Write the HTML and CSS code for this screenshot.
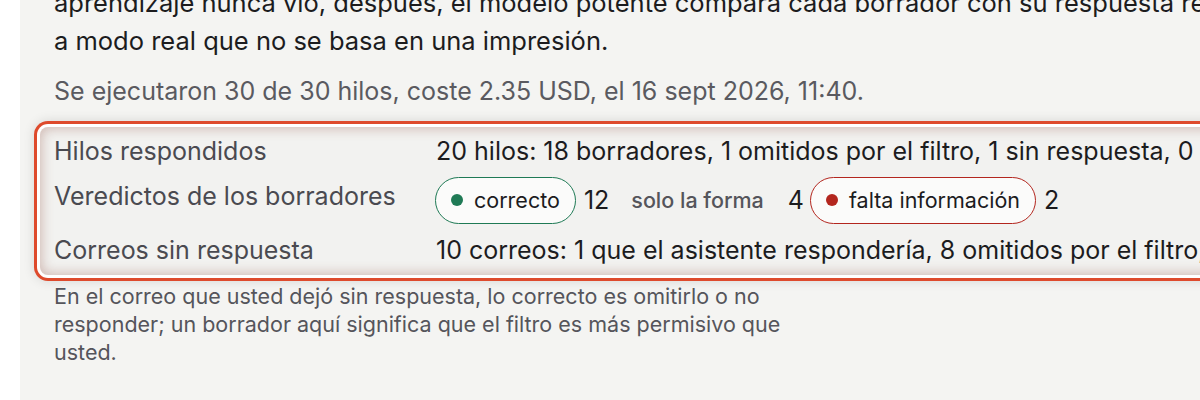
FILE: index.html
```html
<!DOCTYPE html>
<html lang="es">
<head>
<meta charset="utf-8">
<link rel="stylesheet" href="styles.css">
</head>
<body>
<main class="panel">
  <p class="intro">aprendizaje nunca vio, después, el modelo potente compara cada borrador con su respuesta real<br>a modo real que no se basa en una impresión.</p>
  <p class="meta">Se ejecutaron 30 de 30 hilos, coste 2.35 USD, el 16 sept 2026, 11:40.</p>
  <section class="summary">
    <div class="row">
      <div class="label">Hilos respondidos</div>
      <div class="value">20 hilos: 18 borradores, 1 omitidos por el filtro, 1 sin respuesta, 0 enviados</div>
    </div>
    <div class="row row-verdicts">
      <div class="label">Veredictos de los borradores</div>
      <div class="value verdicts">
        <span class="group"><span class="pill pill-ok"><span class="dot"></span>correcto</span><span class="count">12</span></span>
        <span class="group"><span class="pill pill-plain">solo la forma</span><span class="count">4</span></span>
        <span class="group"><span class="pill pill-bad"><span class="dot"></span>falta información</span><span class="count">2</span></span>
      </div>
    </div>
    <div class="row row-last">
      <div class="label">Correos sin respuesta</div>
      <div class="value">10 correos: 1 que el asistente respondería, 8 omitidos por el filtro, 1 sin borrador</div>
    </div>
  </section>
  <p class="note">En el correo que usted dejó sin respuesta, lo correcto es omitirlo o no responder; un borrador aquí significa que el filtro es más permisivo que usted.</p>
</main>
</body>
</html>
```
FILE: styles.css
```css
html, body {
  margin: 0;
  padding: 0;
  background: #ffffff;
  overflow: hidden;
  height: 400px;
}
body {
  font-family: Inter, "Noto Sans", sans-serif;
  color: #1e1e20;
}
.panel {
  display: flow-root;
  margin-left: 20px;
  width: 1400px;
  height: 420px;
  background: #f4f4f2;
  padding: 0 0 0 34px;
  box-sizing: border-box;
}
.intro {
  margin: -16px 0 0;
  font-size: 25.5px;
  line-height: 38px;
  white-space: nowrap;
  color: #1c1c1e;
}
.meta {
  margin: 15px 0 0;
  font-size: 25px;
  line-height: 32px;
  color: #5a5a60;
  white-space: nowrap;
}
.summary {
  margin: 20px 0 0 -14px;
  padding: 8px 0 0 14px;
  border-radius: 8px;
  background: #f2f2f0;
  box-shadow:
    inset 0 0 12px 2px rgba(140, 70, 55, 0.32),
    0 0 0 3px #ffffff,
    0 0 0 6px #de4a2c,
    0 0 12px 6px rgba(0, 0, 0, 0.12);
}
.row {
  display: grid;
  grid-template-columns: 382px 1fr;
  align-items: center;
  height: 32px;
  white-space: nowrap;
}
.row-verdicts { height: 58px; }
.row-last { height: 50px; }
.label {
  font-size: 25px;
  color: #4a4a50;
}
.value {
  font-size: 25px;
  color: #1c1c1e;
}
.verdicts {
  display: flex;
  align-items: center;
  gap: 6px;
  margin-left: -1px;
  margin-top: 8px;
}
.group {
  display: flex;
  align-items: center;
  gap: 8px;
}
.pill {
  display: inline-flex;
  align-items: center;
  gap: 11px;
  height: 47px;
  box-sizing: border-box;
  padding: 0 15px 0 15px;
  border-radius: 24px;
  font-size: 21.5px;
  background: #fbfbfa;
  color: #1c1c1e;
}
.dot {
  width: 12px;
  height: 12px;
  border-radius: 50%;
}
.pill-ok { border: 1.5px solid #1f7a55; }
.pill-ok .dot { background: #1f7a55; }
.pill-bad { border: 1.5px solid #b3261e; }
.pill-bad .dot { background: #b3261e; }
.pill-plain {
  background: transparent;
  border: 1.5px solid transparent;
  font-size: 21.5px;
  font-weight: 500;
  color: #55555b;
}
.count {
  font-size: 25px;
  color: #1c1c1e;
}
.note {
  margin: 7px 0 0;
  width: 790px;
  font-size: 21.5px;
  line-height: 28px;
  color: #55555b;
}
```
